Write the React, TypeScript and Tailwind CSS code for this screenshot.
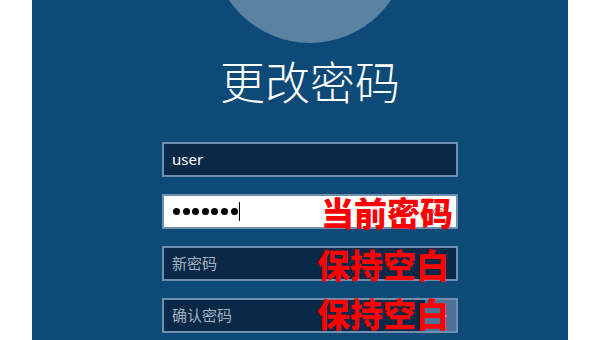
import { ArrowRight, Eye } from "lucide-react";

const cjk = { fontFamily: '"Noto Sans CJK SC", "Noto Sans", sans-serif' };

function Field({
    children,
    white,
    note,
    noteClass,
}: {
    children: React.ReactNode;
    white?: boolean;
    note?: string;
    noteClass?: string;
}) {
    return (
        <div
            className={`relative flex h-[35px] w-[296px] items-center border-2 border-[#6e90ae] ${
                white ? "bg-white" : "bg-[#0a2948]"
            }`}
        >
            {children}
            {note && (
                <span
                    className={`absolute text-[33px] font-black leading-none text-[#ff0000] ${noteClass}`}
                    style={cjk}
                >
                    {note}
                </span>
            )}
        </div>
    );
}

export default function App() {
    return (
        <div className="flex h-[340px] w-[600px] justify-center bg-white">
            <div className="flex h-full w-[536px] flex-col items-center overflow-hidden bg-[#0e4a77] pl-[20px]">
                <div className="mt-[-153px] h-[196px] w-[196px] shrink-0 rounded-full bg-[#5a82a1]" />

                <h1
                    className="mt-[15px] text-[45px] font-light leading-none text-white"
                    style={cjk}
                >
                    更改密码
                </h1>

                <div className="mt-[39px] flex flex-col gap-[17px]">
                    <Field>
                        <span
                            className="pl-[8px] text-[15px] text-white"
                            style={{ fontFamily: '"Noto Sans", sans-serif' }}
                        >
                            user
                        </span>
                    </Field>

                    <Field white note="当前密码" noteClass="right-[3px] top-[0px]">
                        <div className="flex items-center pl-[9px]">
                            <div className="flex gap-[2.6px]">
                                {Array.from({ length: 7 }).map((_, i) => (
                                    <span key={i} className="h-[7px] w-[7px] rounded-full bg-black" />
                                ))}
                            </div>
                            <span className="ml-[1px] h-[19px] w-[1px] bg-black" />
                        </div>
                        <Eye className="absolute right-[8px] h-4 w-4 text-gray-400" />
                    </Field>

                    <Field note="保持空白" noteClass="right-[7px] top-[0px]">
                        <span className="pl-[8px] text-[15px] text-[#a3b1bf]" style={cjk}>
                            新密码
                        </span>
                    </Field>

                    <Field note="保持空白" noteClass="right-[7px] top-[-3px]">
                        <span className="pl-[8px] text-[15px] text-[#a3b1bf]" style={cjk}>
                            确认密码
                        </span>
                        <div className="ml-auto flex h-full w-[31px] items-center justify-center bg-[#4a7397]">
                            <ArrowRight className="h-4 w-4 text-white" strokeWidth={2} />
                        </div>
                    </Field>
                </div>
            </div>
        </div>
    );
}
